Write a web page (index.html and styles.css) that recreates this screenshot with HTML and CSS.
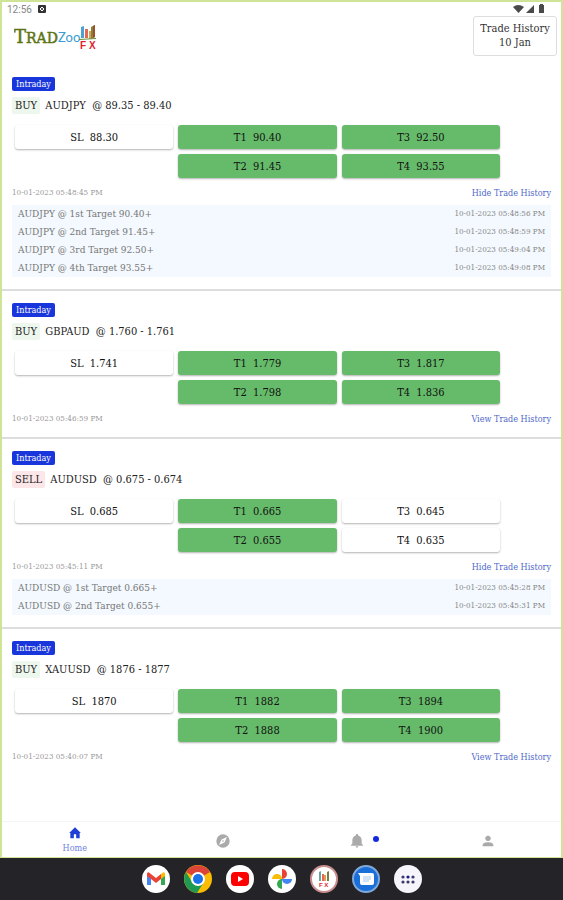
FILE: index.html
```html
<!DOCTYPE html>
<html lang="en">

	<head>
		<meta charset="utf-8">
		<meta name="viewport" content="width=device-width, initial-scale=1">
		<title>TradZoo FX</title>
		<link rel="stylesheet" href="styles.css">
	</head>

	<body>
		<div class="screen">
			<div class="app">
				<div class="status">
					<span>12:56</span>
					<svg class="status-app" width="8" height="8" viewBox="0 0 8 8"><rect width="8" height="8" rx="1" fill="#333"/><path d="M3 2h2v1h1v2H5v1H3V5H2V3h1z" fill="#fff"/><rect x="3" y="3" width="2" height="2" fill="#555"/></svg>
					<svg class="status-right" width="32" height="10" viewBox="0 0 32 10" fill="#4a4a4a"><path d="M0 3Q5-1 11 3L5.500 9z"/><path d="M21 1v8h-8z"/><path d="M26 1h1V0h3v1h1v8h-5z"/></svg>
				</div>
				<header class="header">
					<svg class="logo" width="84" height="28" viewBox="0 0 84 28">
						<text class="logo-trad" x="0" y="19"><tspan class="logo-t">T</tspan>RAD</text>
						<text class="logo-zoo" x="44" y="18">Zoo</text>
						<path d="M67 3l3-1v12h-3z" fill="#4ba3d3"/>
						<path d="M71 5h3v9h-3z" fill="#e06a55"/>
						<path d="M75 7h2v8h-2z" fill="#e39b5c"/>
						<path d="M77 3l4-2v12l-4 2z" fill="#7b8b2c"/>
						<path d="M79 2l2-1v12l-2 1z" fill="#a04b32"/>
						<path d="M65 15l17-1v1l-17 1z" fill="#6b8f3a"/>
						<text class="logo-fx" x="66" y="25">F X</text>
					</svg>
					<button class="date-btn" type="button">Trade History<br>10 Jan</button>
				</header>

				<main class="list">
					<section class="card">
						<span class="badge">Intraday</span>
						<h2 class="title"><span class="side buy">BUY</span> AUDJPY&nbsp; @ 89.35 - 89.40</h2>
						<div class="levels">
							<button class="level sl" type="button">SL&nbsp; 88.30</button>
							<button class="level hit" type="button">T1&nbsp; 90.40</button>
							<button class="level hit" type="button">T3&nbsp; 92.50</button>
							<button class="level hit second" type="button">T2&nbsp; 91.45</button>
							<button class="level hit" type="button">T4&nbsp; 93.55</button>
						</div>
						<div class="meta"><span>10-01-2023 05:48:45 PM</span><a href="#">Hide Trade History</a></div>
						<ul class="history">
							<li><span>AUDJPY @ 1st Target 90.40+</span><time>10-01-2023 05:48:56 PM</time></li>
							<li><span>AUDJPY @ 2nd Target 91.45+</span><time>10-01-2023 05:48:59 PM</time></li>
							<li><span>AUDJPY @ 3rd Target 92.50+</span><time>10-01-2023 05:49:04 PM</time></li>
							<li><span>AUDJPY @ 4th Target 93.55+</span><time>10-01-2023 05:49:08 PM</time></li>
						</ul>
					</section>

					<section class="card">
						<span class="badge">Intraday</span>
						<h2 class="title"><span class="side buy">BUY</span> GBPAUD&nbsp; @ 1.760 - 1.761</h2>
						<div class="levels">
							<button class="level sl" type="button">SL&nbsp; 1.741</button>
							<button class="level hit" type="button">T1&nbsp; 1.779</button>
							<button class="level hit" type="button">T3&nbsp; 1.817</button>
							<button class="level hit second" type="button">T2&nbsp; 1.798</button>
							<button class="level hit" type="button">T4&nbsp; 1.836</button>
						</div>
						<div class="meta"><span>10-01-2023 05:46:59 PM</span><a href="#">View Trade History</a></div>
					</section>

					<section class="card">
						<span class="badge">Intraday</span>
						<h2 class="title"><span class="side sell">SELL</span> AUDUSD&nbsp; @ 0.675 - 0.674</h2>
						<div class="levels">
							<button class="level sl" type="button">SL&nbsp; 0.685</button>
							<button class="level hit" type="button">T1&nbsp; 0.665</button>
							<button class="level" type="button">T3&nbsp; 0.645</button>
							<button class="level hit second" type="button">T2&nbsp; 0.655</button>
							<button class="level" type="button">T4&nbsp; 0.635</button>
						</div>
						<div class="meta"><span>10-01-2023 05:45:11 PM</span><a href="#">Hide Trade History</a></div>
						<ul class="history">
							<li><span>AUDUSD @ 1st Target 0.665+</span><time>10-01-2023 05:45:28 PM</time></li>
							<li><span>AUDUSD @ 2nd Target 0.655+</span><time>10-01-2023 05:45:31 PM</time></li>
						</ul>
					</section>

					<section class="card">
						<span class="badge">Intraday</span>
						<h2 class="title"><span class="side buy">BUY</span> XAUUSD&nbsp; @ 1876 - 1877</h2>
						<div class="levels">
							<button class="level sl" type="button">SL&nbsp; 1870</button>
							<button class="level hit" type="button">T1&nbsp; 1882</button>
							<button class="level hit" type="button">T3&nbsp; 1894</button>
							<button class="level hit second" type="button">T2&nbsp; 1888</button>
							<button class="level hit" type="button">T4&nbsp; 1900</button>
						</div>
						<div class="meta"><span>10-01-2023 05:40:07 PM</span><a href="#">View Trade History</a></div>
					</section>
				</main>

				<nav class="tabs">
					<a class="tab active" href="#">
						<svg width="14" height="14" viewBox="0 0 24 24" fill="currentColor"><path d="M10 21v-7h4v7h6v-9h2L12 2 2 12h2v9z"/></svg>
						<span>Home</span>
					</a>
					<a class="tab" href="#" aria-label="Explore">
						<svg width="16" height="16" viewBox="0 0 24 24" fill="currentColor"><path d="M12 2a10 10 0 1 0 0 20 10 10 0 0 0 0-20zm2.200 12.200L6 18l3.800-8.200L18 6z"/><circle cx="12" cy="12" r="1.200"/></svg>
					</a>
					<a class="tab" href="#" aria-label="Notifications">
						<span class="bell">
							<svg width="16" height="16" viewBox="0 0 24 24" fill="currentColor"><path d="M12 22a2 2 0 0 0 2-2h-4a2 2 0 0 0 2 2zm7-6v-5c0-3.500-2-6-5-6.800V3.500a2 2 0 0 0-4 0v.7C7 5 5 7.500 5 11v5l-2 2v1h18v-1z"/></svg>
							<i class="dot"></i>
						</span>
					</a>
					<a class="tab" href="#" aria-label="Profile">
						<svg width="16" height="16" viewBox="0 0 24 24" fill="currentColor"><circle cx="12" cy="8" r="4"/><path d="M4 20v-2c0-3 5-4 8-4s8 1 8 4v2z"/></svg>
					</a>
				</nav>
			</div>

			<footer class="dock">
				<a href="#" aria-label="Gmail"><svg viewBox="0 0 28 28"><circle cx="14" cy="14" r="14" fill="#fff"/><path d="M5 10v10h4v-8z" fill="#4285f4"/><path d="M19 12v8h4V10z" fill="#34a853"/><path d="M19 9l2-1.500c1-.6 2 .2 2 1.500v2l-4 3z" fill="#fbbc04"/><path d="M5 9c0-1.300 1-2.100 2-1.500L14 13l5-4v5l-5 4-5-4-4-3z" fill="#ea4335"/></svg></a>
				<a href="#" aria-label="Chrome"><svg viewBox="0 0 28 28"><circle cx="14" cy="14" r="14" fill="#fbbc04"/><path d="M14 14L2 7A14 14 0 0 1 26 7z" fill="#db4437"/><path d="M2 7a14 14 0 0 0 11 21l7-11-6 4-6-4z" fill="#1e9a52"/><circle cx="14" cy="14" r="7" fill="#fff"/><circle cx="14" cy="14" r="5" fill="#1a73e8"/></svg></a>
				<a href="#" aria-label="YouTube"><svg viewBox="0 0 28 28"><circle cx="14" cy="14" r="14" fill="#fff"/><rect x="5" y="7" width="18" height="14" rx="4" fill="#f00"/><path d="M12 11v6l5-3z" fill="#fff"/></svg></a>
				<a href="#" aria-label="Photos"><svg viewBox="0 0 28 28"><circle cx="14" cy="14" r="14" fill="#fff"/><path d="M14 4a5 5 0 0 1 0 10z" fill="#ea4335"/><path d="M24 14a5 5 0 0 1-10 0z" fill="#4285f4"/><path d="M14 24a5 5 0 0 1 0-10z" fill="#34a853"/><path d="M4 14a5 5 0 0 1 10 0z" fill="#fbbc04"/></svg></a>
				<a href="#" aria-label="TradZoo FX"><svg viewBox="0 0 28 28"><circle cx="14" cy="14" r="13" fill="#fff" stroke="#c98f8f" stroke-width="2"/><path d="M9 7l2-1v10H9z" fill="#6aa5a0"/><path d="M12 9h2v7h-2z" fill="#e06a55"/><path d="M14 10h2v6h-2z" fill="#e39b5c"/><path d="M17 7l2-1v10h-2z" fill="#7b7b3c"/><text class="dock-fx" x="9" y="22">F X</text></svg></a>
				<a href="#" aria-label="Messages"><svg viewBox="0 0 28 28"><circle cx="14" cy="14" r="13" fill="#1a6fd8" stroke="#7fa9da" stroke-width="2"/><path d="M6 8h14q2 0 2 2v8q0 2-2 2H10q-2 0-2-2v-7z" fill="#fff"/><path d="M11 12h8M11 14h8M11 16h6" stroke="#a9c8ef" stroke-width="1"/></svg></a>
				<a href="#" aria-label="All apps"><svg viewBox="0 0 28 28"><circle cx="14" cy="14" r="14" fill="#f7f5fc"/><g fill="#3a3a66"><circle cx="9" cy="12" r="1.600"/><circle cx="14" cy="12" r="1.600" fill="#1a1a90"/><circle cx="19" cy="12" r="1.600"/><circle cx="9" cy="17" r="1.600"/><circle cx="14" cy="17" r="1.600"/><circle cx="19" cy="17" r="1.600"/></g></svg></a>
			</footer>
		</div>
	</body>

</html>
```
FILE: styles.css
```css
* {
	margin: 0;
	padding: 0;
	box-sizing: border-box;
}
body {
	font-family: "Roboto Slab", "DejaVu Serif Condensed", "DejaVu Serif", serif;
	font-size: 10px;
	color: #222;
	background: #fff;
}
a {
	text-decoration: none;
}
svg {
	display: block;
}
.screen {
	min-height: 100vh;
	display: flex;
	flex-direction: column;
}
.app {
	flex: 1;
	display: flex;
	flex-direction: column;
	border: 2px solid #cfe497;
	border-bottom-width: 1px;
}

/* top */
.status {
	display: flex;
	align-items: center;
	height: 14px;
	padding: 0 16px 0 5px;
	font-family: Roboto, sans-serif;
	color: #888;
}
.status-app {
	margin-left: 6px;
}
.status-right {
	margin-left: auto;
}
.header {
	display: flex;
	justify-content: space-between;
	align-items: flex-start;
	height: 49px;
	padding: 0 4px 0 12px;
}
.logo {
	margin-top: 8px;
}
.logo-trad {
	font: 14px "DejaVu Serif", serif;
	fill: #5d7414;
	stroke: #5d7414;
	stroke-width: .5;
}
.logo-t {
	font-size: 18px;
}
.logo-zoo {
	font: 13px Lato, sans-serif;
	fill: #3b9bd3;
}
.logo-fx {
	font: bold 10px "Liberation Sans", sans-serif;
	fill: #e0242b;
}
.date-btn {
	min-width: 84px;
	height: 40px;
	border: 1px solid #ddd;
	border-radius: 3px;
	background: #fff;
	font: inherit;
	font-size: 11px;
	line-height: 14px;
	color: #333;
}

/* trades */
.list {
	flex: 1;
}
.card {
	display: flex;
	flex-direction: column;
	align-items: flex-start;
	padding: 12px 10px 10px;
	border-bottom: 2px solid #ddd;
}
.card:last-child {
	border-bottom: 0;
}
.badge {
	height: 14px;
	padding: 0 4px;
	border-radius: 2px;
	background: #1836dc;
	color: #fff;
	font-size: 9px;
	line-height: 14px;
}
.title {
	margin: 6px 0 11px;
	font-size: 11px;
	font-weight: normal;
	line-height: 17px;
}
.side {
	display: inline-block;
	margin-right: 2px;
	padding: 0 3px;
	border-radius: 2px;
}
.buy {
	background: #edf7ee;
}
.sell {
	background: #fde6e8;
}
.levels {
	display: grid;
	grid-template-columns: repeat(3, 1fr);
	gap: 5px;
	width: 90%;
	margin-left: 3px;
}
.level {
	height: 24px;
	border: 0;
	border-radius: 3px;
	background: #fff;
	box-shadow: 0 1px 2px rgba(0, 0, 0, .3);
	font: inherit;
	font-size: 11px;
	color: #111;
}
.hit {
	background: #66bb6a;
}
.second {
	grid-column: 2;
}
.meta {
	display: flex;
	justify-content: space-between;
	width: 100%;
	margin-top: 7px;
	font-size: 8px;
	line-height: 16px;
	color: #999;
}
.meta a {
	font-size: 9px;
	color: #5069c8;
}
.history {
	width: 100%;
	margin: 4px 0 2px;
	padding: 0 6px;
	background: #f3f9fe;
	list-style: none;
}
.history li {
	display: flex;
	justify-content: space-between;
	font-size: 10px;
	line-height: 18px;
	color: #777;
}
.history time {
	font-size: 8px;
	color: #888;
}

/* bottom tabs */
.tabs {
	display: grid;
	grid-template-columns: 25fr 26fr 20fr 25fr;
	height: 36px;
	border-top: 1px solid #f5f5f5;
}
.tab {
	display: flex;
	flex-direction: column;
	align-items: center;
	justify-content: center;
	padding-top: 2px;
	font-size: 9px;
	line-height: 16px;
	color: #aaa;
}
.active {
	color: #1f3fd6;
}
.active span {
	color: #6f7fe0;
}
.bell {
	position: relative;
}
.dot {
	position: absolute;
	top: 3px;
	left: 24px;
	width: 6px;
	height: 6px;
	border-radius: 50%;
	background: #1428e0;
}

/* launcher */
.dock {
	display: flex;
	justify-content: center;
	align-items: center;
	gap: 14px;
	height: 42px;
	background: #242428;
}
.dock svg {
	width: 28px;
	height: 28px;
}
.dock-fx {
	font: bold 6px "Liberation Sans", sans-serif;
	fill: #e0242b;
}
```
